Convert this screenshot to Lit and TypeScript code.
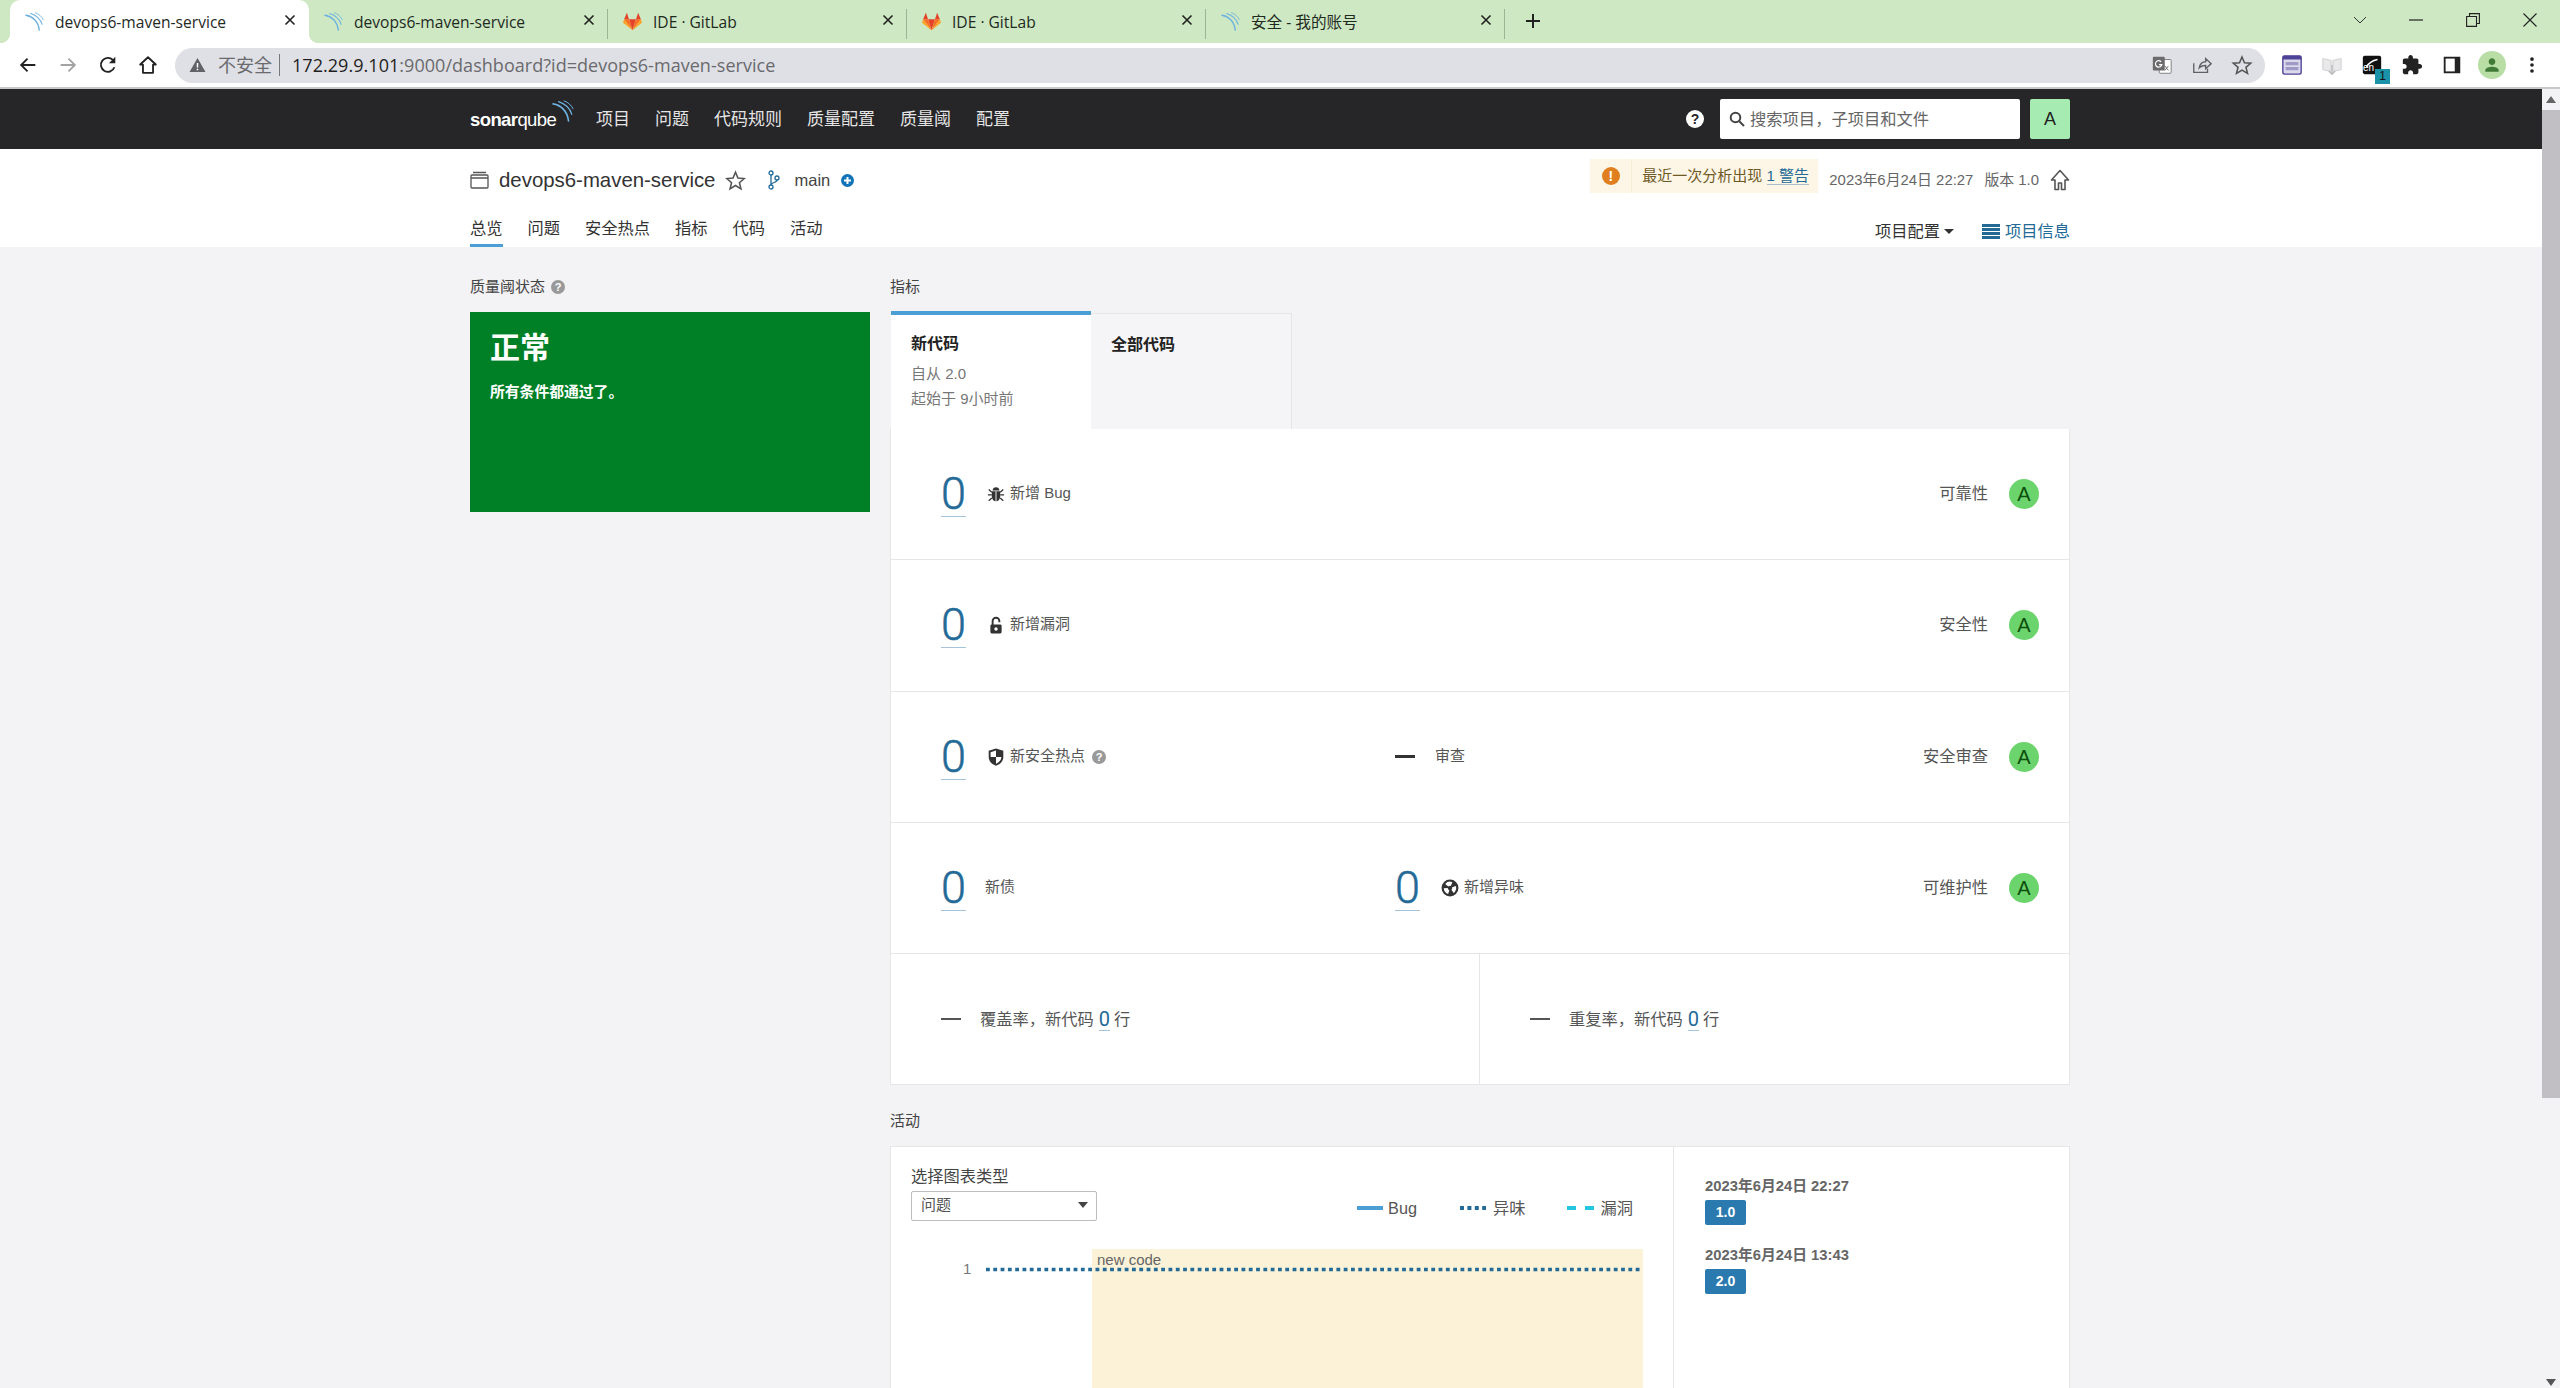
import { LitElement, css, html, svg } from "lit";
import { customElement } from "lit/decorators.js";

const waves = (w: number, h: number) => html`<svg width=${w} height=${h} viewBox="0 0 20 20" fill="none" stroke="#6fb3e0" stroke-linecap="round">
  <path stroke-width="1.5" d="M1 3.5C8 4.5 14 10 15 19" />
  <path stroke-width="1.1" d="M6 1.5C12 3.5 16.500 8 18 13" />
  <path stroke-width="0.9" d="M11 .8C14.500 2 17.500 4.500 19.200 8" />
</svg>`;

const gitlab = html`<svg width="21" height="21" viewBox="0 0 24 24">
  <path fill="#e24329" d="M12 23 16.400 9H7.600Z" />
  <path fill="#fc6d26" d="M12 23 7.600 9H1.400ZM12 23 16.400 9H22.600Z" />
  <path fill="#fca326" d="M1.400 9 .1 13c-.1.400 0 .8.400 1L12 23ZM22.600 9 23.900 13c.1.400 0 .8-.4 1L12 23Z" />
  <path fill="#e24329" d="M1.400 9H7.600L4.900 1ZM22.600 9H16.400L19.100 1Z" />
</svg>`;

const closeX = html`<svg class="close" width="14" height="14" viewBox="0 0 14 14" stroke="#222" stroke-width="1.6" fill="none"><path d="M2.500 2.500 11.500 11.500M11.500 2.500 2.500 11.500" /></svg>`;

const browserTabs = [
  { title: "devops6-maven-service", icon: waves(19, 19), active: true },
  { title: "devops6-maven-service", icon: waves(19, 19) },
  { title: "IDE · GitLab", icon: gitlab },
  { title: "IDE · GitLab", icon: gitlab },
  { title: "安全 - 我的账号", icon: waves(19, 19) },
];

const tbIcon = (body: unknown, size = 22) => html`<span class="slot"><svg width=${size} height=${size} viewBox="0 0 24 24">${body}</svg></span>`;

const icons = {
  back: svg`<path d="M20 12H5M11.500 5 4.500 12l7 7" fill="none" stroke="#222" stroke-width="2" />`,
  forward: svg`<path d="M4 12H19M12.500 5 19.500 12l-7 7" fill="none" stroke="#a3a3a3" stroke-width="2" />`,
  reload: svg`<path d="M19 14.500A7.600 7.600 0 1 1 17.300 6.500" fill="none" stroke="#222" stroke-width="2" /><path d="M20 3v7h-7z" fill="#222" />`,
  home: svg`<path d="M12 3.500 3.500 11.500H6.500V20.500H17.500V11.500H20.500Z" fill="none" stroke="#222" stroke-width="2" stroke-linejoin="round" />`,
  share: svg`<path d="M3 10V20H18V16M9 15C10 10.500 13 8.500 16 8.500V5L22 10.500 16 16V12.500C13.500 12.500 11 13 9 15Z" fill="none" stroke="#5f6368" stroke-width="1.500" />`,
  star: svg`<path d="M12 3.200 14.700 9.600 21.500 10.100 16.300 14.500 18 21.200 12 17.500 6 21.200 7.700 14.500 2.500 10.100 9.300 9.600Z" fill="none" stroke="#555" stroke-width="1.700" />`,
  translate: svg`<rect x="9" y="6" width="13" height="15" rx="1" fill="#fff" stroke="#777" /><rect x="2" y="3" width="13" height="15" rx="1" fill="#6b6b6b" /><path d="M11 8.500a3.500 3.500 0 1 0 .8 3H8.800" fill="none" stroke="#fff" stroke-width="1.300" /><path d="M15 13l4 5M19 13l-4 5" stroke="#666" />`,
  ext1: svg`<rect x="2" y="2" width="20" height="20" rx="2" fill="#dcd9ec" stroke="#4d4397" stroke-width="1.500" /><rect x="2" y="2" width="20" height="4" fill="#4d4397" /><path d="M5 10.500H19M5 16H19" stroke="#9f9ac6" stroke-width="3.500" />`,
  ext2: svg`<path d="M2 5 11 7V19L2 17ZM22 5 13 7V19L22 17Z" fill="#e9e9ec" stroke="#ccc" /><path d="M12 12V22M8.500 18.500 12 22l3.500-3.500" fill="none" stroke="#bbb" stroke-width="1.500" />`,
  ext3: svg`<rect x="2" y="2" width="20" height="20" rx="2" fill="#111" /><path d="M6 14C9 9 13 7 18 6" stroke="#fff" stroke-width="1.800" fill="none" />`,
  puzzle: svg`<path fill="#222" d="M20.500 11H19V7c0-1.100-.9-2-2-2h-4V3.500C13 2.120 11.880 1 10.500 1S8 2.120 8 3.500V5H4c-1.100 0-1.990.9-1.990 2v3.800H3.500c1.490 0 2.700 1.210 2.700 2.700s-1.210 2.700-2.700 2.700H2V20c0 1.100.9 2 2 2h3.800v-1.500c0-1.490 1.210-2.700 2.700-2.700 1.490 0 2.700 1.210 2.700 2.700V22H17c1.100 0 2-.9 2-2v-4h1.500c1.380 0 2.500-1.120 2.500-2.500S21.880 11 20.500 11z" />`,
  panel: svg`<rect x="4" y="4" width="16" height="16" fill="#fff" stroke="#222" stroke-width="2" /><rect x="15" y="4" width="5" height="16" fill="#222" />`,
  dots: svg`<circle cx="12" cy="5.500" r="2" fill="#222" /><circle cx="12" cy="12" r="2" fill="#222" /><circle cx="12" cy="18.500" r="2" fill="#222" />`,
};

const bug = html`<svg class="mi" viewBox="0 0 16 16" fill="#333" stroke="#333">
  <path stroke="none" d="M5 4.800C5 3 6.300 2 8 2s3 1 3 2.800z" />
  <path stroke="none" d="M4.300 5.500h7.400V10c0 2.700-1.600 4.500-3.700 4.500S4.300 12.700 4.300 10z" />
  <path fill="none" stroke-width="1.100" d="M1.500 4l2.800 2.500M14.500 4l-2.800 2.500M.8 8.800h3.500M15.200 8.800h-3.500M1.500 14l2.800-2.500M14.500 14l-2.800-2.500" />
  <path stroke="#fff" stroke-width=".8" d="M8 5.500v9" />
</svg>`;
const lock = html`<svg class="mi" viewBox="0 0 16 16">
  <path d="M5 8V4.500a3 3 0 0 1 6 0V5.500" fill="none" stroke="#333" stroke-width="1.700" />
  <rect x="3" y="7.500" width="10" height="8" rx="1.200" fill="#333" />
  <circle cx="8" cy="11.500" r="1.500" fill="#fff" />
</svg>`;
const shield = html`<svg class="mi" viewBox="0 0 16 16">
  <path d="M8 .5 14.500 2.500V8C14.500 12 11.500 14.500 8 15.800 4.500 14.500 1.500 12 1.500 8V2.500Z" fill="#333" />
  <path d="M8 2.200V8H3.200V3.700ZM8 8H12.800C12.700 10.800 10.800 12.800 8 14Z" fill="#fff" />
</svg>`;
const smell = html`<svg class="mi" viewBox="0 0 16 16">
  <circle cx="8" cy="8" r="7.500" fill="#333" />
  <circle cx="8" cy="8" r="3.800" fill="none" stroke="#fff" stroke-width="3.600" stroke-dasharray="4.600 3.360" transform="rotate(-140 8 8)" />
</svg>`;

const measures = [
  { value: "0", icon: bug, label: "新增 Bug", rating: "可靠性" },
  { value: "0", icon: lock, label: "新增漏洞", rating: "安全性" },
  { value: "0", icon: shield, label: "新安全热点", help: true, review: true, rating: "安全审查" },
  { value: "0", label: "新债", smell: true, rating: "可维护性" },
];

@customElement("app-root")
export class AppRoot extends LitElement {
  static styles = css`
    :host {
      display: block;
      width: 2560px;
      height: 1388px;
      overflow: hidden;
      background: #f3f2f5;
      color: #444;
      font: 16.25px/20px "Liberation Sans", "Noto Sans CJK SC", sans-serif;
    }
    .strip {
      display: flex;
      align-items: stretch;
      height: 43px;
      padding-left: 10px;
      background: #cde8c2;
    }
    .tab {
      position: relative;
      display: flex;
      align-items: center;
      flex: none;
      box-sizing: border-box;
      width: 299px;
      padding: 0 12px 0 15px;
      font: 15.600px/20px "Open Sans", "Noto Sans CJK SC", sans-serif;
      color: #1f2a1f;
    }
    .tab .ico { display: flex; width: 19px; height: 21px; align-items: center; justify-content: center; margin-right: 11px; }
    .tab .close { margin-left: auto; margin-top: -3px; }
    .tab.active { background: #fff; border-radius: 10px 10px 0 0; }
    .tab.active::before,
    .tab.active::after {
      content: "";
      position: absolute;
      bottom: 0;
      width: 10px;
      height: 10px;
    }
    .tab.active::before { left: -10px; background: radial-gradient(circle at 0 0, transparent 10px, #fff 10.500px); }
    .tab.active::after { right: -10px; background: radial-gradient(circle at 100% 0, transparent 10px, #fff 10.500px); }
    .tab.sep::after {
      content: "";
      position: absolute;
      right: 0;
      top: 9px;
      height: 30px;
      border-right: 1px solid #9db594;
    }
    .newtab { display: flex; align-items: center; margin: 0 0 2px 18px; }
    .winctl { display: flex; margin-left: auto; padding-right: 2px; align-items: center; margin-bottom: 4px; }
    .winctl span { display: flex; justify-content: center; width: 57px; }
    .winctl span:first-child { margin-right: -1px; }
    .toolbar {
      display: flex;
      align-items: center;
      box-sizing: border-box;
      height: 46px;
      padding-left: 8px;
      background: #fff;
      border-bottom: 2px solid #c9c9c9;
    }
    .slot { position: relative; display: flex; align-items: center; justify-content: center; flex: none; width: 40px; height: 30px; }
    .omni {
      display: flex;
      align-items: center;
      box-sizing: border-box;
      width: 2090px;
      height: 35px;
      margin: 0 7px 0 7px;
      padding: 0 3px 0 14px;
      background: #dfe0e5;
      border-radius: 18px;
      font: 18px/20px "Open Sans", "Noto Sans CJK SC", sans-serif;
      color: #6a6a6e;
    }
    .omni .warn { margin-right: 12px; }
    .omni .unsafe { padding-right: 7px; border-right: 1px solid #777; line-height: 22px; margin-right: 12px; }
    .omni .host { color: #1f1f22; }
    .omni .url { letter-spacing: 0.04px; }
    .omni .right { display: flex; margin-left: auto; }
    .badge1 {
      position: absolute;
      left: 23px;
      top: 19px;
      width: 15px;
      height: 15px;
      background: #1a93a8;
      color: #111;
      font-size: 12px;
      line-height: 15px;
      text-align: center;
    }
    .en { position: absolute; left: 11px; top: 13px; font-size: 10px; line-height: 10px; color: #fff; }
    .avatar { width: 28px; height: 28px; border-radius: 50%; background: #b8dea6; display: flex; align-items: center; justify-content: center; }

    .body { display: flex; height: 1299px; }
    .main { width: 2542px; flex: none; }
    .scroll { flex: 1; display: flex; flex-direction: column; align-items: center; background: #f3f2f5; }
    .scroll .up { height: 21px; display: flex; align-items: center; }
    .scroll .thumb { align-self: stretch; height: 988px; background: #c1bfc3; }
    .scroll .down { margin-top: auto; height: 18px; }

    .nav {
      display: flex;
      align-items: center;
      height: 60px;
      padding: 0 472px 0 470px;
      background: #262528;
      color: #e4e4e4;
      font-size: 17px;
    }
    .logo { display: flex; align-items: flex-start; width: 126px; flex: none; color: #fff; }
    .logo .word { font-size: 18.5px; letter-spacing: -0.6px; line-height: 22px; margin-top: 2px; }
    .logo b { font-weight: 700; }
    .logo span.q { font-weight: 400; }
    .logo svg { margin: -7px 0 0 -4px; }
    .nav .links { display: flex; gap: 25px; margin-top: 2px; }
    .nav .help { margin-left: auto; margin-right: 16px; width: 18px; height: 18px; background: #fff; color: #262528; font-size: 14px; line-height: 18px; }
    .help { display: inline-block; border-radius: 50%; background: #999; color: #fff; font-weight: 700; text-align: center; }
    .help.s { width: 14px; height: 14px; font-size: 11px; line-height: 14px; }
    .search {
      display: flex;
      align-items: center;
      box-sizing: border-box;
      width: 300px;
      height: 40px;
      padding-left: 9px;
      background: #fff;
      border-radius: 2px;
      color: #666;
      font-size: 16.300px;
    }
    .search svg { margin-right: 5px; }
    .me { width: 40px; height: 40px; margin-left: 10px; background: #a6ecb2; border-radius: 2px; color: #222; font-size: 18px; line-height: 40px; text-align: center; }

    .sub { height: 98px; padding: 10px 472px 0 470px; box-sizing: border-box; background: #fff; }
    .sub-top { display: flex; align-items: center; height: 42px; }
    .proj { margin-left: 10px; font-size: 20.400px; color: #333; }
    .sub-top .star { margin-left: 10px; }
    .sub-top .branch { margin-left: 22px; }
    .sub-top .bname { margin-left: 14px; font-size: 16.500px; color: #444; }
    .sub-top .plus { margin-left: 11px; }
    .warnbox {
      display: flex;
      align-items: center;
      align-self: flex-start;
      box-sizing: border-box;
      width: 228px;
      height: 34px;
      margin-left: auto;
      background: #fdf6e6;
      color: #6f5a26;
      font-size: 15px;
    }
    .warnbox .w { display: flex; justify-content: center; align-items: center; width: 42px; height: 100%; border-right: 1px solid #f6ecd2; flex: none; box-sizing: border-box; }
    .warnbox .dot { width: 18px; height: 18px; border-radius: 50%; background: #e07f1f; color: #fff; font-weight: 700; font-size: 14px; line-height: 18px; text-align: center; }
    .warnbox .t { padding-left: 10px; white-space: nowrap; }
    .warnbox a { color: #236a97; border-bottom: 1px solid #a9bdca; }
    .meta { margin-left: 11px; font-size: 14.900px; color: #666; white-space: nowrap; }
    .meta span { margin-left: 11px; }
    .sub-top .home { margin-left: 11px; }
    .sub-nav { display: flex; align-items: flex-end; height: 46px; }
    .sub-nav .item { margin-right: 25px; padding-bottom: 6px; border-bottom: 3px solid transparent; color: #333; }
    .sub-nav .item.on { border-bottom-color: #4b9fd5; }
    .sub-nav .tools { display: flex; align-items: center; margin-left: auto; padding-bottom: 6px; color: #333; }
    .caret { margin: 0 28px 0 4px; width: 0; height: 0; border: 5px solid transparent; border-top: 5px solid #333; border-bottom: 0; }
    .tools .info { display: flex; align-items: center; gap: 5px; color: #236a97; }

    .content {
      display: grid;
      grid-template-columns: 400px 1180px;
      gap: 20px;
      width: 1600px;
      padding: 30px 0 0 470px;
    }
    .h { font-size: 15px; color: #444; height: 20px; display: flex; align-items: center; gap: 6px; }
    .gate { margin-top: 15px; box-sizing: border-box; height: 200px; padding: 21px 20px 20px; background: #008026; color: #fff; }
    .gate .ok { font-size: 30px; font-weight: 700; line-height: 30px; }
    .gate .msg { margin-top: 19px; font-size: 14.800px; font-weight: 700; }
    .mtabs { display: flex; margin: 14px 0 0 1px; height: 119px; }
    .mtab { box-sizing: border-box; width: 200px; padding: 15px 20px; }
    .mtab.on { position: relative; z-index: 1; height: 119px; padding-top: 19px; background: #fff; border-top: 4px solid #4b9fd5; }
    .mtab.off { width: 201px; margin-top: 2px; height: 116px; padding-top: 21px; border: 1px solid #e6e6e6; border-left: 0; border-bottom: 0; background: #f5f5f7; }
    .mtab b { display: block; color: #222; font-size: 16px; height: 24px; }
    .mtab .d { font-size: 15px; color: #777; line-height: 25px; margin-top: 3px; }
    .card { margin-top: -1px; background: #fff; border: 1px solid #e6e6e6; border-top: 0; border-bottom: 0; }
    .row {
      display: flex;
      align-items: center;
      box-sizing: border-box;
      height: 131.300px;
      padding: 0 30px 0 50px;
      border-bottom: 1px solid #e6e6e6;
    }
    .cell { display: flex; align-items: center; width: 454px; flex: none; font-size: 15px; color: #555; }
    .num {
      display: inline-block;
      font: 300 45px/45px Roboto, sans-serif;
      -webkit-text-stroke: 0.5px #236a97;
      color: #236a97;
      border-bottom: 1px solid #a5c4d8;
      width: 25px;
    }
    .mi { width: 18px; height: 18px; margin-left: 21px; flex: none; }
    .lab { margin: 0 0 2px 5px; white-space: nowrap; }
    .lab.plain { margin-left: 19px; }
    .lab.flat { margin-left: 0; }
    .cell .help { margin-left: 7px; }
    .dash { display: inline-block; width: 20px; height: 3px; background: #333; margin-right: 20px; }
    .rating { display: flex; align-items: center; margin-left: auto; color: #555; }
    .circle { width: 30px; height: 30px; margin-left: 21px; border-radius: 50%; background: #6cd46c; color: #0d4f0d; font-size: 20px; line-height: 30px; text-align: center; }
    .bottom { display: grid; grid-template-columns: 588px 1fr; height: 131.300px; border-bottom: 1px solid #e6e6e6; box-sizing: border-box; }
    .bottom > div { display: flex; align-items: center; padding-left: 50px; color: #555; }
    .bottom > div + div { border-left: 1px solid #e6e6e6; }
    .bottom .dash { height: 2px; background: #555; margin-right: 19px; }
    .bottom .zero { font: 400 20px/22px Roboto, sans-serif; color: #236a97; border-bottom: 1px solid #a5c4d8; margin: 0 4px 0 5px; }
    .act { grid-column: 2; }
    .act .h { margin-top: 26px; }
    .acard { display: flex; height: 300px; margin-top: 15px; background: #fff; border: 1px solid #e6e6e6; border-bottom: 0; }
    .aleft { box-sizing: border-box; width: 783px; flex: none; padding: 19px 40px 0 20px; border-right: 1px solid #e6e6e6; }
    .ahead { display: flex; justify-content: space-between; align-items: flex-end; }
    .sel {
      display: flex;
      align-items: center;
      justify-content: space-between;
      box-sizing: border-box;
      width: 186px;
      height: 30px;
      margin-top: 5px;
      padding: 0 8px 2px 9px;
      border: 1px solid #bdbdbd;
      border-radius: 2px;
      font-size: 15px;
      color: #555;
    }
    .sel i { width: 0; height: 0; border: 5px solid transparent; border-top: 6px solid #444; border-bottom: 0; }
    .legend { display: flex; gap: 41px; margin-bottom: 3px; color: #555; }
    .legend div { display: flex; align-items: center; gap: 7px; }
    .legend div:first-child { gap: 5px; margin-right: 2px; }
    .chart { display: block; margin-top: 28px; }
    .chart text { font: 15px "Liberation Sans", sans-serif; fill: #666; }
    .aright { padding: 29px 0 0 31px; }
    .date { font-size: 14.800px; font-weight: 700; color: #666; }
    .ver { width: 41px; height: 25px; margin: 4px 0 20px; background: #2a7ab0; border-radius: 2px; color: #fff; font-size: 14px; font-weight: 700; line-height: 25px; text-align: center; }
  `;

  private renderMeasure(m: (typeof measures)[number]) {
    return html`<div class="row">
      <div class="cell">
        <span class="num">${m.value}</span>
        ${m.icon ?? ""}
        <span class="lab ${m.icon ? "" : "plain"}">${m.label}</span>
        ${m.help ? html`<span class="help s">?</span>` : ""}
      </div>
      ${m.review ? html`<div class="cell"><span class="dash"></span><span class="lab flat">审查</span></div>` : ""}
      ${m.smell ? html`<div class="cell"><span class="num">0</span>${smell}<span class="lab">新增异味</span></div>` : ""}
      <div class="rating"><span class="lab flat">${m.rating}</span><span class="circle">A</span></div>
    </div>`;
  }

  render() {
    return html`
      <div class="strip">
        ${browserTabs.map(
          (t, i) => html`<div class="tab ${t.active ? "active" : ""} ${i > 0 ? "sep" : ""}">
            <span class="ico">${t.icon}</span><span>${t.title}</span>${closeX}
          </div>`
        )}
        <div class="newtab">
          <svg width="20" height="20" viewBox="0 0 20 20" stroke="#222" stroke-width="2"><path d="M10 3V17M3 10H17" /></svg>
        </div>
        <div class="winctl">
          <span><svg width="14" height="14" viewBox="0 0 14 14" fill="none" stroke="#333"><path d="M1 4 7 10 13 4" /></svg></span>
          <span><svg width="14" height="14" viewBox="0 0 14 14" stroke="#222" stroke-width="1.200"><path d="M0 7H14" /></svg></span>
          <span><svg width="14" height="14" viewBox="0 0 14 14" fill="none" stroke="#222" stroke-width="1.100"><path d="M.6 3.500H10.500V13.400H.6ZM3.500 3.500V.6H13.400V10.500H10.500" /></svg></span>
          <span><svg width="14" height="14" viewBox="0 0 14 14" fill="none" stroke="#222" stroke-width="1.100"><path d="M.5.5 13.500 13.500M13.500.5.5 13.500" /></svg></span>
        </div>
      </div>

      <div class="toolbar">
        ${tbIcon(icons.back)}${tbIcon(icons.forward)}${tbIcon(icons.reload)}${tbIcon(icons.home)}
        <div class="omni">
          <svg class="warn" width="17" height="16" viewBox="0 0 17 16"><path d="M8.500 1 16.500 15H.5Z" fill="#5f6368" /><path d="M8.500 6V10.500M8.500 11.800V13.300" stroke="#fff" stroke-width="1.500" /></svg>
          <span class="unsafe">不安全</span>
          <span class="url"><span class="host">172.29.9.101</span>:9000/dashboard?id=devops6-maven-service</span>
          <span class="right">${tbIcon(icons.translate)}${tbIcon(icons.share)}${tbIcon(icons.star)}</span>
        </div>
        ${tbIcon(icons.ext1)}${tbIcon(icons.ext2)}
        <span class="slot">
          <svg width="22" height="22" viewBox="0 0 24 24">${icons.ext3}</svg>
          <span class="en">en</span><span class="badge1">1</span>
        </span>
        ${tbIcon(icons.puzzle)}${tbIcon(icons.panel)}
        <span class="slot"><span class="avatar"><svg width="20" height="20" viewBox="0 0 24 24"><path fill="#3f7a36" d="M12 12c2.210 0 4-1.790 4-4s-1.790-4-4-4-4 1.790-4 4 1.790 4 4 4zm0 2c-2.670 0-8 1.340-8 4v2h16v-2c0-2.660-5.330-4-8-4z" /></svg></span></span>
        ${tbIcon(icons.dots)}
      </div>

      <div class="body">
        <div class="main">
          <div class="nav">
            <div class="logo">
              <span class="word"><b>sonar</b><span class="q">qube</span></span>
              ${waves(22, 22)}
            </div>
            <div class="links">
              ${["项目", "问题", "代码规则", "质量配置", "质量阈", "配置"].map((l) => html`<span>${l}</span>`)}
            </div>
            <span class="help">?</span>
            <div class="search">
              <svg width="16" height="16" viewBox="0 0 16 16" fill="none" stroke="#444" stroke-width="2"><circle cx="6.500" cy="6.500" r="4.800" /><path d="M10 10 15 15" /></svg>
              搜索项目，子项目和文件
            </div>
            <div class="me">A</div>
          </div>

          <div class="sub">
            <div class="sub-top">
              <svg width="19" height="18" viewBox="0 0 19 18" fill="none" stroke="#555" stroke-width="1.300"><rect x="1" y="4" width="17" height="13" rx="1" /><path d="M3 1.500H16M1 7H18" /></svg>
              <span class="proj">devops6-maven-service</span>
              <svg class="star" width="21" height="21" viewBox="0 0 24 24" fill="none" stroke="#555" stroke-width="1.800"><path d="M12 2.500 14.800 9.200 22 9.800 16.500 14.500 18.200 21.500 12 17.700 5.800 21.500 7.500 14.500 2 9.800 9.200 9.200Z" /></svg>
              <svg class="branch" width="12" height="20" viewBox="0 0 12 20" fill="none" stroke="#236a97" stroke-width="1.300"><circle cx="3" cy="3" r="2" /><circle cx="3" cy="17" r="2" /><circle cx="9" cy="8" r="2" /><path d="M3 5V15M9 10C9 13 3 12 3 15" /></svg>
              <span class="bname">main</span>
              <svg class="plus" width="13" height="13" viewBox="0 0 13 13"><circle cx="6.500" cy="6.500" r="6.500" fill="#1173b8" /><path d="M3 6.500H10M6.500 3V10" stroke="#fff" stroke-width="2" /></svg>
              <div class="warnbox">
                <div class="w"><span class="dot">!</span></div>
                <div class="t">最近一次分析出现 <a>1 警告</a></div>
              </div>
              <div class="meta">2023年6月24日 22:27<span>版本 1.0</span></div>
              <svg class="home" width="20" height="22" viewBox="0 0 20 22" fill="none" stroke="#555" stroke-width="1.600"><path d="M10 1.500 1.500 11H5V20.500H8.500V14H11.500V20.500H15V11H18.500Z" stroke-linejoin="round" /></svg>
            </div>
            <div class="sub-nav">
              ${["总览", "问题", "安全热点", "指标", "代码", "活动"].map(
                (l, i) => html`<span class="item ${i === 0 ? "on" : ""}">${l}</span>`
              )}
              <div class="tools">
                项目配置<i class="caret"></i>
                <span class="info">
                  <svg width="18" height="15" viewBox="0 0 18 15" fill="#236a97"><path d="M0 0H18V3H0ZM0 4H18V7H0ZM0 8H18V11H0ZM0 12H18V15H0Z" /></svg>
                  项目信息
                </span>
              </div>
            </div>
          </div>

          <div class="content">
            <div>
              <div class="h">质量阈状态 <span class="help s">?</span></div>
              <div class="gate">
                <div class="ok">正常</div>
                <div class="msg">所有条件都通过了。</div>
              </div>
            </div>
            <div>
              <div class="h">指标</div>
              <div class="mtabs">
                <div class="mtab on">
                  <b>新代码</b>
                  <div class="d">自从 2.0<br />起始于 9小时前</div>
                </div>
                <div class="mtab off"><b>全部代码</b></div>
              </div>
              <div class="card">
                ${measures.map((m) => this.renderMeasure(m))}
                <div class="bottom">
                  <div><span class="dash"></span>覆盖率，新代码<span class="zero">0</span>行</div>
                  <div><span class="dash"></span>重复率，新代码<span class="zero">0</span>行</div>
                </div>
              </div>
              <div class="act">
                <div class="h">活动</div>
                <div class="acard">
                  <div class="aleft">
                    <div class="ahead">
                      <div>
                        选择图表类型
                        <div class="sel">问题<i></i></div>
                      </div>
                      <div class="legend">
                        <div><svg width="26" height="4"><path d="M0 2H26" stroke="#4b9fd5" stroke-width="4" /></svg>Bug</div>
                        <div><svg width="26" height="4"><path d="M0 2H26" stroke="#236a97" stroke-width="4" stroke-dasharray="4 3.400" /></svg>异味</div>
                        <div><svg width="27" height="4"><path d="M0 2H27" stroke="#24c6e0" stroke-width="4" stroke-dasharray="9 9" /></svg>漏洞</div>
                      </div>
                    </div>
                    <svg class="chart" width="732" height="140" viewBox="0 0 732 140">
                      <rect x="181" y="0" width="551" height="140" fill="#fbf2d8" />
                      <text x="186" y="16">new code</text>
                      <text x="52" y="25" style="fill:#777">1</text>
                      <path d="M75 20.600H732" stroke="#236a97" stroke-width="3.500" stroke-dasharray="3.800 3.500" />
                    </svg>
                  </div>
                  <div class="aright">
                    <div class="date">2023年6月24日 22:27</div>
                    <div class="ver">1.0</div>
                    <div class="date">2023年6月24日 13:43</div>
                    <div class="ver">2.0</div>
                  </div>
                </div>
              </div>
            </div>
          </div>
        </div>
        <div class="scroll">
          <div class="up"><svg width="10" height="7" viewBox="0 0 10 7"><path d="M5 0 10 7H0Z" fill="#666" /></svg></div>
          <div class="thumb"></div>
          <div class="down"><svg width="10" height="7" viewBox="0 0 10 7"><path d="M0 0H10L5 7Z" fill="#555" /></svg></div>
        </div>
      </div>
    `;
  }
}
